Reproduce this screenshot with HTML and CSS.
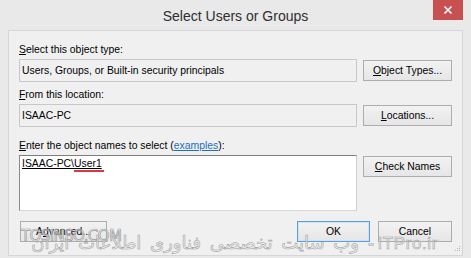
FILE: index.html
```html
<!DOCTYPE html>
<html>
<head>
<meta charset="utf-8">
<link rel="stylesheet" href="styles.css">
</head>
<body>
<div class="window">
  <div class="titlebar">
    <div></div>
    <div class="title">Select Users or Groups</div>
    <div class="close">
      <svg width="10" height="10" viewBox="0 0 10 10"><path d="M1.5 1.5 L8.5 8.5 M8.5 1.5 L1.5 8.5" stroke="#fff" stroke-width="1.6"/></svg>
    </div>
  </div>
  <div class="client">
    <div class="label"><u>S</u>elect this object type:</div>
    <div class="row r1">
      <div class="field ro">Users, Groups, or Built-in security principals</div>
      <div class="btn"><u>O</u>bject Types...</div>
    </div>
    <div class="label"><u>F</u>rom this location:</div>
    <div class="row r2">
      <div class="field ro">ISAAC-PC</div>
      <div class="btn"><u>L</u>ocations...</div>
    </div>
    <div class="label"><u>E</u>nter the object names to select (<span class="link">examples</span>):</div>
    <div class="row r3">
      <div class="field names"><span class="resolved">ISAAC-PC\<span class="spell">User1</span></span></div>
      <div class="btn"><u>C</u>heck Names</div>
    </div>
    <div class="bottom">
      <div class="btn adv">A<u>d</u>vanced...</div>
      <div class="spacer"></div>
      <div class="btn ok">OK</div>
      <div class="btn cancel">Cancel</div>
    </div>
    <svg class="grip" width="7" height="7" viewBox="0 0 7 7">
      <rect x="5" y="1" width="1" height="1" fill="#b8b8b8"/>
      <rect x="3" y="3" width="1" height="1" fill="#b8b8b8"/>
      <rect x="5" y="3" width="1" height="1" fill="#b8b8b8"/>
      <rect x="1" y="5" width="1" height="1" fill="#b8b8b8"/>
      <rect x="3" y="5" width="1" height="1" fill="#b8b8b8"/>
      <rect x="5" y="5" width="1" height="1" fill="#b8b8b8"/>
    </svg>
  </div>
  <div class="wm-site">TOSINSO.COM</div>
  <div class="wm-fa" dir="rtl"><span class="wm-latin">ITPro.ir</span> <span class="wm-persian">- وب سایت تخصصی فناوری اطلاعات ایران</span></div>
</div>
</body>
</html>
```
FILE: styles.css
```css
html, body {
  margin: 0;
  padding: 0;
  background: #e9e9e9;
}
.window {
  position: relative;
  width: 471px;
  height: 258px;
  box-sizing: border-box;
  background: #e9e9e9;
  display: flex;
  flex-direction: column;
  font-family: "Liberation Sans", Arial, sans-serif;
  font-size: 10.4px;
  color: #000;
  overflow: hidden;
}
.titlebar {
  height: 30px;
  display: grid;
  grid-template-columns: 1fr auto 1fr;
  flex: none;
}
.title {
  font-size: 14px;
  line-height: 32px;
  color: #2e2e2e;
}
.close {
  justify-self: end;
  align-self: start;
  margin-right: 8px;
  width: 30px;
  height: 20px;
  background: #c75050;
  display: flex;
  align-items: center;
  justify-content: center;
}
.client {
  position: relative;
  flex: 1;
  margin: 0 8px 2px 8px;
  border: 1px solid #d6d6d6;
  background: #f0f0f0;
  padding: 12px 10px 0 10px;
  display: flex;
  flex-direction: column;
}
.label {
  height: 14px;
  line-height: 14px;
  margin-bottom: 2px;
}
.row {
  display: flex;
  gap: 6px;
  align-items: flex-start;
}
.r1 { margin-bottom: 6px; }
.r2 { margin-bottom: 12px; }
.field {
  flex: 1;
  box-sizing: border-box;
  height: 23px;
  border: 1px solid #c8c8c8;
  padding: 0 2px;
  line-height: 21px;
  white-space: nowrap;
}
.ro { background: #f0f0f0; }
.names {
  height: 56px;
  background: #fff;
  border-top-color: #7d7d7d;
  border-left-color: #8a8a8a;
  border-right-color: #cfcfcf;
  border-bottom-color: #d6d6d6;
  line-height: 14px;
  padding-top: 1px;
}
.resolved {
  position: relative;
  text-decoration: underline;
}
.spell {
  position: relative;
}
.spell::after {
  content: "";
  position: absolute;
  left: 0;
  right: -2px;
  bottom: -3px;
  height: 2px;
  background: #d8383f;
}
.btn {
  box-sizing: border-box;
  width: 89px;
  height: 21px;
  margin-top: 1px;
  border: 1px solid #adadad;
  background: linear-gradient(#f2f2f2, #e6e6e6);
  display: flex;
  align-items: center;
  justify-content: center;
  white-space: nowrap;
}
.link {
  color: #1a6fc6;
  text-decoration: underline;
}
.bottom {
  margin-top: 9px;
  display: flex;
  gap: 8px;
  padding-left: 1px;
}
.spacer { flex: 1; }
.adv { width: 87px; }
.ok {
  width: 73px;
  border-color: #5d9fe0;
  box-shadow: inset 0 0 0 1px #cfe3f7;
}
.cancel { width: 74px; }
.grip {
  position: absolute;
  right: 1px;
  bottom: 3px;
}
.wm-site {
  position: absolute;
  left: 21px;
  top: 227px;
  font-family: "DejaVu Sans", sans-serif;
  font-size: 15px;
  letter-spacing: -0.6px;
  color: rgba(245, 245, 245, 0.55);
  -webkit-text-stroke: 0.7px #9c9c9c;
}
.wm-fa {
  position: absolute;
  left: 20px;
  right: 33px;
  top: 232px;
  font-family: "DejaVu Sans", sans-serif;
  color: rgba(245, 245, 245, 0.55);
  -webkit-text-stroke: 0.6px #a2a2a2;
  white-space: nowrap;
  text-align: right;
}
.wm-latin {
  font-family: "Liberation Sans", sans-serif;
  font-size: 17px;
  letter-spacing: 0.6px;
}
.wm-persian {
  font-size: 18px;
  word-spacing: 3px;
}
```
